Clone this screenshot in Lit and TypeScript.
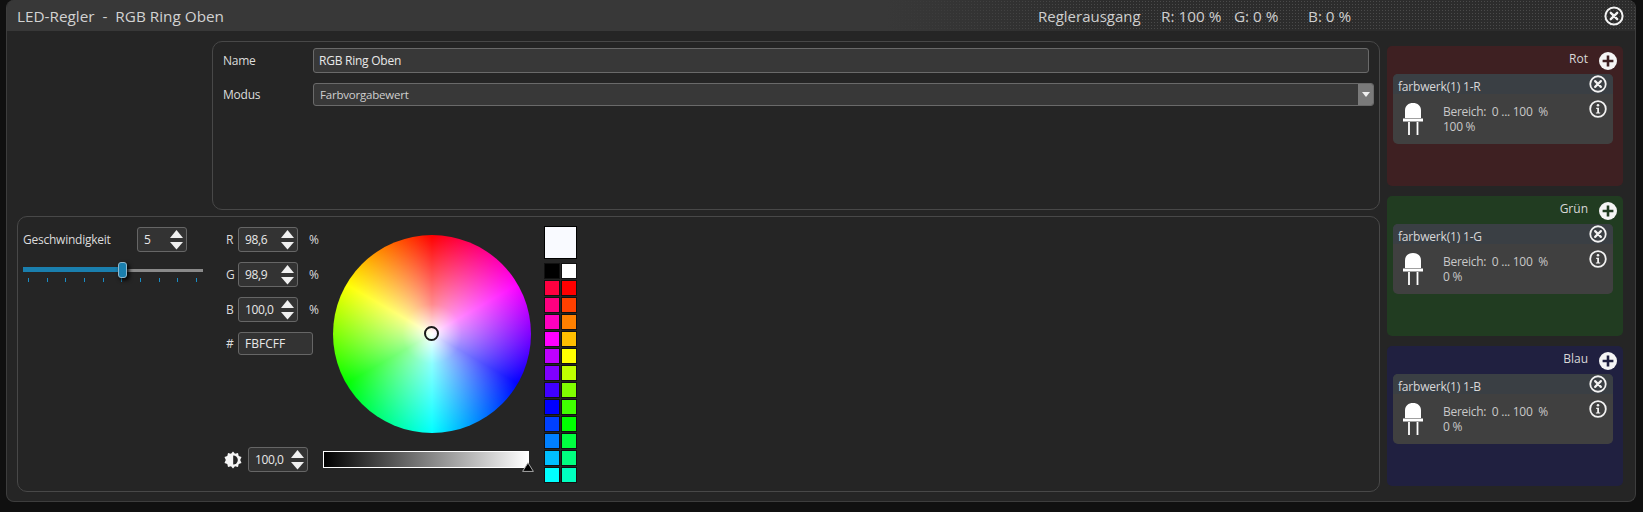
import { LitElement, html, css, svg } from "lit";
import { customElement } from "lit/decorators.js";

const left = ["#000000","#ff0040","#ff0080","#ff00bf","#ff00ff","#bf00ff","#8000ff","#4000ff","#0000ff","#0040ff","#0080ff","#00bfff","#00ffff"];
const right = ["#ffffff","#ff0000","#ff4000","#ff8000","#ffbf00","#ffff00","#bfff00","#80ff00","#40ff00","#00ff00","#00ff40","#00ff80","#00ffbf"];

const closeIcon = (size: number) => html`<svg width=${size} height=${size} viewBox="0 0 20 20"><circle cx="10" cy="10" r="8.6" fill="none" stroke="#f2f2f2" stroke-width="2"/><path d="M6.8 6.8l6.4 6.4M13.2 6.8l-6.4 6.4" stroke="#f2f2f2" stroke-width="2.4" stroke-linecap="round"/></svg>`;
const infoIcon = html`<svg width="18" height="18" viewBox="0 0 18 18"><circle cx="9" cy="9" r="7.8" fill="none" stroke="#f2f2f2" stroke-width="1.8"/><circle cx="9" cy="5.2" r="1.3" fill="#f2f2f2"/><path d="M7.2 7.8H10V12.4H11.2V13.6H6.9V12.4H8.2V9H7.2Z" fill="#f2f2f2"/></svg>`;
const plusIcon = (c: string) => html`<svg width="18" height="18" viewBox="0 0 18 18"><circle cx="9" cy="9" r="9" fill="#f5f5f5"/><path d="M9 3.6V14.4M3.6 9H14.4" stroke=${c} stroke-width="2.6"/></svg>`;
const ledIcon = html`<svg width="22" height="34" viewBox="0 0 22 34"><path d="M3 16V8.5C3 3.5 6.5 1 11 1S19 3.5 19 8.5V16Z" fill="#ffffff"/><rect x="1" y="16.5" width="20" height="3" fill="#ffffff"/><path d="M7 20V33M15.5 20V33" stroke="#ffffff" stroke-width="1.8"/></svg>`;
const sunIcon = html`<svg width="18" height="18" viewBox="0 0 18 18"><path d="M9 0.5L11 2.8L14 1.9L14.7 5L17.5 6L16.2 9L17.5 12L14.7 13L14 16.1L11 15.2L9 17.5L7 15.2L4 16.1L3.3 13L0.5 12L1.8 9L0.5 6L3.3 5L4 1.9L7 2.8Z" fill="#f5f5f5"/><path d="M9.2 4.4A4.6 4.6 0 0 1 9.2 13.6Z" fill="#252525"/></svg>`;
const arrows = svg`<path d="M6.5 0L13 8H0Z" fill="#f0f0f0"/><path d="M0 12H13L6.5 19.5Z" fill="#f0f0f0"/>`;

@customElement("app-root")
export class AppRoot extends LitElement {
  static styles = css`
    :host { display: block; width: 1643px; height: 512px; box-sizing: border-box; background: #101010; padding: 0 7px 10px 6px; font-family: "Open Sans", "Noto Sans", sans-serif; color: #dcdcdc; font-size: 12px; letter-spacing: -0.24px; overflow: hidden; }
    * { box-sizing: border-box; }
    .window { height: 502px; display: flex; flex-direction: column; background: #252525; border: 1px solid #3d3d3d; border-top: none; border-radius: 8px; overflow: hidden; }
    .titlebar { height: 31px; flex: none; display: flex; align-items: center; position: relative; padding-left: 10px; font-size: 15.3px; letter-spacing: 0; color: #d2d2d2;
      background: linear-gradient(90deg, #383838 0%, #383838 54%, rgba(56,56,56,0) 68%), radial-gradient(circle at 1.5px 1.5px, #4a4a4a 0.8px, transparent 1px) 0 0 / 3px 3px, #2c2c2c; }
    .title { white-space: pre; width: 1021px; }
    .out { white-space: pre; display: flex; color: #cfcfcf; }
    .out span:nth-child(1) { width: 123px; font-size: 15px; }
    .out span:nth-child(2) { width: 73px; }
    .out span:nth-child(3) { width: 74px; }
    .titlebar .close { position: absolute; right: 11px; top: 6px; display: flex; }
    .body { flex: 1; display: flex; padding: 10px 12px 9px 10px; gap: 7px; min-height: 0; }
    .main { width: 1363px; display: flex; flex-direction: column; gap: 6px; }
    .box { border: 1px solid #484848; border-radius: 10px; }
    .form { margin-left: 195px; height: 169px; padding: 6px 5px 0 10px; display: flex; flex-direction: column; gap: 10px; }
    .row { display: flex; align-items: center; }
    .row label { width: 90px; }
    .input { background: #383838; border: 1px solid #6a6a6a; border-radius: 3px; color: #e8e8e8; display: flex; align-items: center; }
    .name { width: 1056px; height: 25px; padding-left: 5px; }
    .select { width: 1061px; height: 23px; padding-left: 6px; font-size: 11.5px; letter-spacing: -0.2px; color: #cfcfcf; justify-content: space-between; padding-right: 0; overflow: hidden; }
    .caret { width: 15px; height: 100%; background: #7a7a7a; display: flex; align-items: center; justify-content: center; }
    .caret i { display: block; width: 0; height: 0; border: 4px solid transparent; border-top: 5px solid #f0f0f0; border-bottom: 0; }
    .color { flex: 1; display: flex; padding: 9px 0 0 5px; min-height: 0; }
    .speed { width: 201px; flex: none; padding-top: 1px; }
    .speedrow { display: flex; align-items: center; justify-content: space-between; width: 164px; }
    .speedspin { width: 50px; flex: none; }
    .spin { height: 25px; padding: 0 3px 0 6px; justify-content: space-between; background: #333; border-color: #666; letter-spacing: -0.4px; }
    .spin svg { flex: none; }
    .slider { position: relative; width: 180px; margin-top: 15px; }
    .track { display: flex; align-items: flex-end; height: 5px; }
    .fill { width: 96px; height: 5px; background: #1a7fae; }
    .rest { flex: 1; height: 3px; background: #8a8a8a; }
    .thumb { position: absolute; left: 95px; top: -5px; width: 9px; height: 16px; background: #1a7fae; border: 1px solid #8fb7cc; border-radius: 3px; box-shadow: 2px 2px 4px #000; }
    .ticks { display: flex; justify-content: space-between; padding: 6px 6px 0 5px; }
    .ticks i { display: block; width: 1px; height: 4px; background: #1a8cc4; }
    .picker { width: 318px; flex: none; padding-top: 1px; display: flex; flex-direction: column; }
    .top { display: flex; height: 220px; }
    .rgb { width: 109px; flex: none; display: flex; flex-direction: column; gap: 10px; }
    .line { display: flex; align-items: center; height: 25px; }
    .line.short { height: 23px; }
    .line b { font-weight: 400; width: 14px; padding-left: 2px; flex: none; }
    .line em { font-style: normal; padding-left: 11px; }
    .rgbspin { width: 60px; }
    .hex { width: 75px; height: 23px; padding-left: 6px; background: #333; border-color: #666; letter-spacing: 0; }
    .wheel { margin: 8px 0 0 0; width: 198px; height: 198px; border-radius: 50%; position: relative; flex: none;
      background: radial-gradient(circle closest-side, #ffffff 0%, rgba(255,255,255,0.55) 30%, rgba(255,255,255,0) 100%), conic-gradient(#ff0000, #ff00ff 60deg, #0000ff 120deg, #00ffff 180deg, #00ff00 240deg, #ffff00 300deg, #ff0000); }
    .dot { position: absolute; left: 91px; top: 91px; width: 15px; height: 15px; border: 2px solid #1a1a1a; border-radius: 50%; }
    .bottom { display: flex; margin-top: 0; }
    .sun { width: 24px; display: flex; align-items: center; flex: none; }
    .bspin { width: 60px; flex: none; }
    .bar { position: relative; margin: 4px 0 0 15px; width: 206px; height: 17px; border: 1px solid #fff; background: linear-gradient(90deg, #000, #fff); }
    .marker { position: absolute; right: -6px; top: 10px; display: flex; }
    .swatches { margin-left: 2px; display: flex; flex-direction: column; gap: 4px; }
    .big { width: 33px; height: 33px; background: #f9faff; border: 1px solid #000; }
    .grid { display: grid; grid-template-columns: 16px 16px; gap: 1px; }
    .grid i { display: block; height: 16px; border: 1px solid #111; }
    .side { width: 236px; display: flex; flex-direction: column; gap: 10px; margin-top: 5px; }
    .slot { height: 140px; border-radius: 5px; position: relative; padding: 28px 10px 0 6px; }
    .slotlabel { position: absolute; right: 35px; top: 4px; letter-spacing: 0; color: #d8d8d8; }
    .plus { position: absolute; right: 6px; top: 6px; display: flex; }
    .card { height: 70px; border-radius: 5px; background: #404040; overflow: hidden; position: relative; }
    .cardhead { height: 20px; background: #3a3f44; padding: 4px 0 0 5px; color: #d8d8d8; letter-spacing: -0.19px; }
    .cardbody { display: flex; padding: 6px 0 0 9px; }
    .led { width: 41px; flex: none; padding-top: 2px; display: flex; }
    .info { line-height: 15px; letter-spacing: -0.28px; color: #c8c8c8; padding-top: 4px; white-space: pre; }
    .act { position: absolute; left: 196px; display: flex; }
    .act.a { top: 1px; }
    .act.b { top: 26px; }
  `;

  spin(v: string, cls: string) {
    return html`<div class="input spin ${cls}"><span>${v}</span><svg width="13" height="20" viewBox="0 0 13 20">${arrows}</svg></div>`;
  }

  slot(label: string, bg: string, name: string, pct: string) {
    return html`<div class="slot" style="background:${bg}">
      <span class="slotlabel">${label}</span><span class="plus">${plusIcon(bg)}</span>
      <div class="card">
        <div class="cardhead">${name}</div>
        <div class="cardbody"><span class="led">${ledIcon}</span><div class="info">Bereich:  0 ... 100  %<br>${pct}</div></div>
        <span class="act a">${closeIcon(18)}</span><span class="act b">${infoIcon}</span>
      </div>
    </div>`;
  }

  render() {
    return html`<div class="window">
      <div class="titlebar">
        <span class="title">LED-Regler  -  RGB Ring Oben</span>
        <span class="out"><span>Reglerausgang</span><span>R: 100 %</span><span>G: 0 %</span><span>B: 0 %</span></span>
        <span class="close">${closeIcon(20)}</span>
      </div>
      <div class="body">
        <div class="main">
          <div class="box form">
            <div class="row"><label>Name</label><div class="input name">RGB Ring Oben</div></div>
            <div class="row"><label>Modus</label><div class="input select"><span>Farbvorgabewert</span><span class="caret"><i></i></span></div></div>
          </div>
          <div class="box color">
            <div class="speed">
              <div class="speedrow"><span>Geschwindigkeit</span><div class="speedspin">${this.spin("5", "")}</div></div>
              <div class="slider">
                <div class="track"><div class="fill"></div><div class="rest"></div></div>
                <div class="thumb"></div>
                <div class="ticks">${Array.from({ length: 10 }, () => html`<i></i>`)}</div>
              </div>
            </div>
            <div class="picker">
              <div class="top">
                <div class="rgb">
                  <div class="line"><b>R</b>${this.spin("98,6", "rgbspin")}<em>%</em></div>
                  <div class="line"><b>G</b>${this.spin("98,9", "rgbspin")}<em>%</em></div>
                  <div class="line"><b>B</b>${this.spin("100,0", "rgbspin")}<em>%</em></div>
                  <div class="line short"><b>#</b><div class="input hex">FBFCFF</div></div>
                </div>
                <div class="wheel"><div class="dot"></div></div>
              </div>
              <div class="bottom">
                <span class="sun">${sunIcon}</span>
                <div class="bspin">${this.spin("100,0", "")}</div>
                <div class="bar"><span class="marker"><svg width="12" height="10" viewBox="0 0 12 10"><path d="M6 0.8L11.4 9.4H0.6Z" fill="#000" stroke="#aaa" stroke-width="1"/></svg></span></div>
              </div>
            </div>
            <div class="swatches">
              <div class="big"></div>
              <div class="grid">${left.map((c, i) => html`<i style="background:${c}"></i><i style="background:${right[i]}"></i>`)}</div>
            </div>
          </div>
        </div>
        <div class="side">
          ${this.slot("Rot", "#3e2022", "farbwerk(1) 1-R", "100 %")}
          ${this.slot("Grün", "#213c21", "farbwerk(1) 1-G", "0 %")}
          ${this.slot("Blau", "#202040", "farbwerk(1) 1-B", "0 %")}
        </div>
      </div>
    </div>`;
  }
}
